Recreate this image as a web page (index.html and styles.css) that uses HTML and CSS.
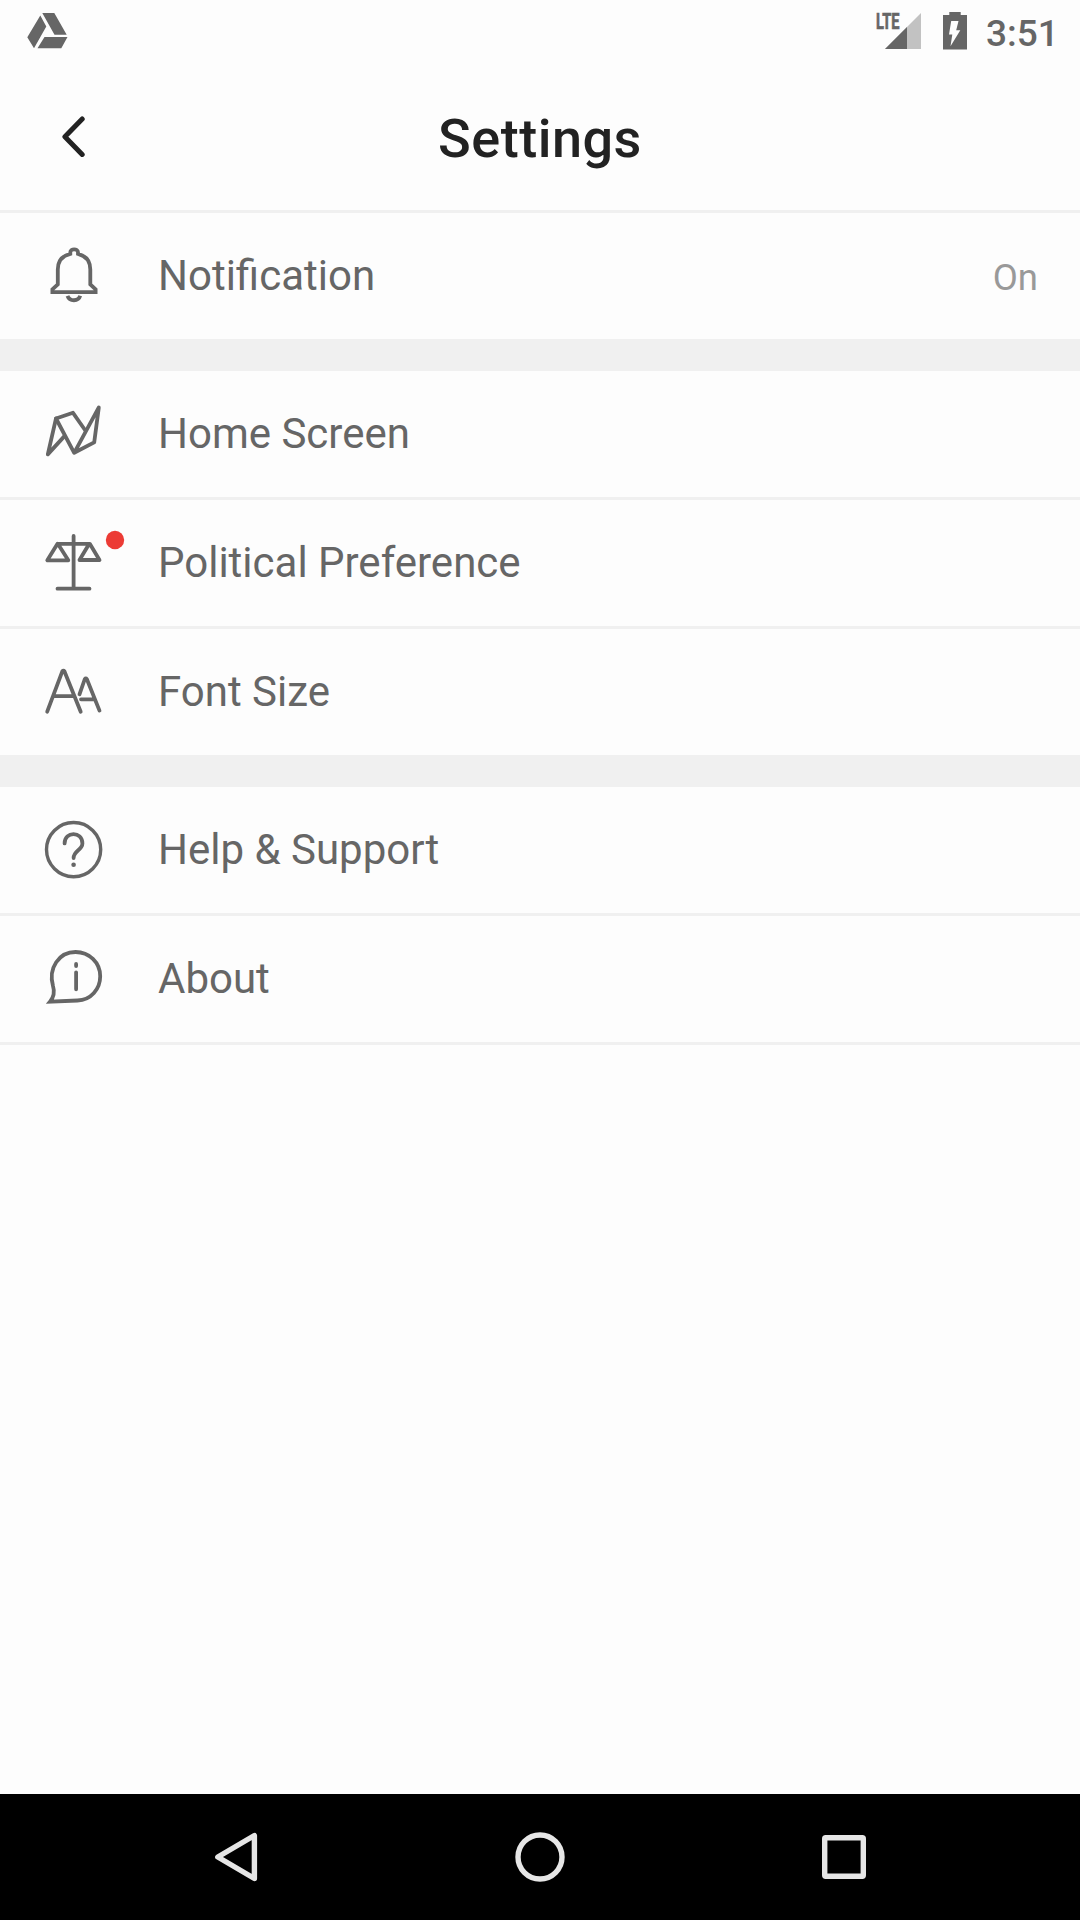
FILE: index.html
```html
<!DOCTYPE html>
<html lang="en">
<head>
<meta charset="utf-8">
<title>Settings</title>
<link rel="stylesheet" href="styles.css">
</head>
<body>
<div class="screen">
  <div class="status-bar">
    <svg class="drive-icon" viewBox="0 0 42 36"><path d="M13.3 2.6 19.3 13.5 7 35.3 0.3 24.3ZM15.3 0H27.3L39.7 21.7H27.5ZM17.5 24H40.5L34.3 35.3H10.5Z"/></svg>
    <div class="status-right">
      <svg class="signal-icon" viewBox="0 0 46 38">
        <path class="signal-weak" d="M46 1V37H10Z"/>
        <path d="M32 15V37H10Z"/>
        <text class="signal-label" x="1" y="17" textLength="23.5" lengthAdjust="spacingAndGlyphs">LTE</text>
      </svg>
      <svg class="battery-icon" viewBox="0 0 24 38">
        <path fill-rule="evenodd" d="M6.3 0H17.7V3H24V37.5H0V3H6.3ZM8.2 9 6 22.5H9.3L7.5 34.3 17.3 18.3H13.2L15.5 9Z"/>
      </svg>
      <span class="clock">3:51</span>
    </div>
  </div>

  <header class="header">
    <svg class="back-icon" viewBox="0 0 24 42"><path d="M20.2 3 2.9 20.7 20.2 38.4"/></svg>
    <h1 class="title">Settings</h1>
  </header>

  <main class="settings">
    <section class="group">
      <div class="row">
        <svg class="row-icon" viewBox="0 0 130 126">
          <path class="square-join" d="M52.4 79.2V76.4L57.8 71.5V56.5C57.8 48 62 42.8 70.3 40.8V39.3C70.3 35.3 78 35.3 78 39.3V40.8C86 42.8 90.3 48 90.3 56.5V71.5L95.6 76.4V79.2Z"/>
          <path class="square-join" d="M67.5 82.8C69.5 88.7 78.5 88.7 80.2 82.8"/>
        </svg>
        <span class="label">Notification</span>
        <span class="value">On</span>
      </div>
    </section>
    <section class="group">
      <div class="row">
        <svg class="row-icon" viewBox="0 0 130 126">
          <path d="M85 59 73 41.8 56 47.5 47.8 83.4 64 65.6"/>
          <path d="M56 47.5 74.2 81.8 94.2 71.4 98.8 36.4 74.2 81.8"/>
        </svg>
        <span class="label">Home Screen</span>
      </div>
      <div class="row">
        <svg class="row-icon" viewBox="0 0 130 126">
          <path d="M73.6 36V88.7M57.5 88.7H89.5M57.5 43.8H89.8L99.5 60H79.5L88.8 44.5M57.5 43.8 47.3 60.3H68.3L58.3 44.5"/>
          <circle class="badge" cx="115" cy="40" r="9.2"/>
        </svg>
        <span class="label">Political Preference</span>
      </div>
      <div class="row">
        <svg class="row-icon" viewBox="0 0 130 126">
          <path d="M47.2 82.7 62.4 42.2Q63.4 40.9 64.4 42.2L80.7 82.7M53.5 67.2H74M79.5 65.3 84.8 50Q85.8 48.6 86.8 50L99.5 81.6M81 70.3H94"/>
        </svg>
        <span class="label">Font Size</span>
      </div>
    </section>
    <section class="group">
      <div class="row">
        <svg class="row-icon" viewBox="0 0 130 126">
          <circle class="ring" cx="73.6" cy="62.6" r="27.1"/>
          <path d="M64.6 56.4C64.6 44 82.4 44 82.4 56.4C82.4 63 73.6 63.5 73.6 71"/>
          <circle class="dot" cx="73.6" cy="77.7" r="2.3"/>
        </svg>
        <span class="label">Help &amp; Support</span>
      </div>
      <div class="row">
        <svg class="row-icon" viewBox="0 0 130 126">
          <path class="square-join" d="M50 85.7C54.7 80 54.7 75.5 53 70C48 52 59 36 75.6 36C89 36 100.2 46.5 100.2 60.3C100.2 73 91 84.2 77.5 84.5Z"/>
          <path d="M76.1 48V50M76.1 56.3V73.3"/>
        </svg>
        <span class="label">About</span>
      </div>
    </section>
  </main>

  <nav class="nav-bar">
    <svg class="nav-icon" viewBox="0 0 50 50"><path d="M5.8 25 42.4 3.5V46.5Z"/></svg>
    <svg class="nav-icon nav-home" viewBox="0 0 50 50"><circle cx="25" cy="25" r="22"/></svg>
    <svg class="nav-icon" viewBox="0 0 50 50"><rect x="5.7" y="5.7" width="38.6" height="38.6" rx="1"/></svg>
  </nav>
</div>
</body>
</html>
```
FILE: styles.css
```css
* {
  box-sizing: border-box;
}

body {
  margin: 0;
  background: #fdfdfd;
  color: #666;
  font-family: Roboto, "Liberation Sans", sans-serif;
}

svg {
  display: block;
  flex: none;
}

.screen {
  display: flex;
  flex-direction: column;
  width: 1080px;
  height: 1920px;
}

.status-bar {
  display: flex;
  justify-content: space-between;
  align-items: flex-start;
  height: 63px;
  padding: 12px 24px 0 27px;
  fill: #666;
}

.drive-icon {
  width: 42px;
  height: 36px;
  margin-top: 1px;
}

.status-right {
  display: flex;
}

.signal-icon {
  width: 46px;
  height: 38px;
  margin-right: 22px;
  overflow: visible;
}

.signal-weak {
  fill: #c2c2c2;
}

.signal-label {
  font-size: 21.5px;
  font-weight: 700;
  stroke: #666;
  stroke-width: 0.7;
}

.battery-icon {
  width: 24px;
  height: 38px;
}

.clock {
  width: 70px;
  margin-left: 19px;
  padding-top: 1px;
  font-size: 37px;
  font-weight: 500;
  line-height: 42px;
  white-space: nowrap;
}

.header {
  display: grid;
  grid-template-columns: 62px 1fr 62px;
  align-items: center;
  height: 150px;
  border-bottom: 3px solid #f0f0f0;
}

.back-icon {
  width: 24px;
  height: 42px;
  margin-left: 62px;
  fill: none;
  stroke: #222;
  stroke-width: 5;
  stroke-linecap: round;
  stroke-linejoin: round;
}

.title {
  margin: 4px 0 0;
  color: #222;
  font-size: 54px;
  font-weight: 500;
  letter-spacing: 0.5px;
  line-height: 64px;
  text-align: center;
}

.settings {
  flex: 1;
}

.group + .group {
  border-top: 32px solid #f0f0f0;
}

.row {
  display: flex;
  align-items: center;
  height: 126px;
  padding-right: 42px;
}

.row + .row {
  height: 129px;
  border-top: 3px solid #f0f0f0;
}

.group:last-child .row:last-child {
  height: 132px;
  border-bottom: 3px solid #f0f0f0;
}

.row-icon {
  width: 130px;
  height: 126px;
  fill: none;
  stroke: #666;
  stroke-width: 3.8;
  stroke-linecap: round;
  stroke-linejoin: round;
}

.square-join {
  stroke-linecap: butt;
  stroke-linejoin: miter;
}

.ring {
  stroke-width: 3.4;
}

.badge {
  fill: #ec3b35;
  stroke: none;
}

.dot {
  fill: #666;
  stroke: none;
}

.label {
  flex: 1;
  margin-left: 28px;
  font-size: 42px;
  line-height: 50px;
}

.value {
  padding-top: 3px;
  color: #999;
  font-size: 36.5px;
  line-height: 44px;
}

.nav-bar {
  display: flex;
  justify-content: space-between;
  align-items: center;
  height: 126px;
  padding: 0 211px 0 212px;
  background: #000;
}

.nav-icon {
  width: 50px;
  height: 50px;
  fill: none;
  stroke: #e6e6e6;
  stroke-width: 5.4;
  stroke-linejoin: round;
}

.nav-home {
  margin-right: 1px;
}
```
